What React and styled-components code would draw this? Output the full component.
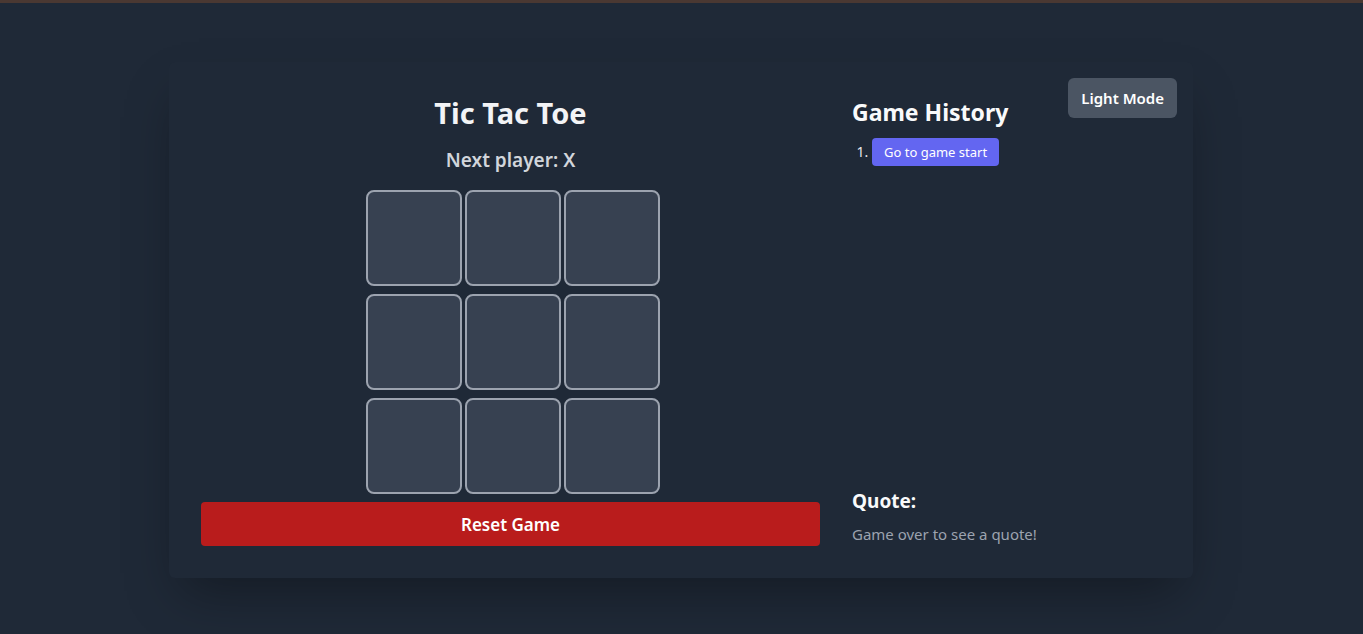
import styled, { createGlobalStyle } from "styled-components";
import { useState } from "react";

const GlobalStyle = createGlobalStyle`
  * { box-sizing: border-box; }
  body {
    margin: 0;
    background: #1f2937;
    font-family: "Noto Sans", "Open Sans", sans-serif;
  }
`;

const TopBar = styled.div`
  height: 3px;
  background: #4a3832;
`;

const Page = styled.main`
  min-height: 631px;
  display: flex;
  justify-content: center;
  align-items: flex-start;
  padding: 59px 1px 0 0;
`;

const Card = styled.section`
  position: relative;
  width: 1024px;
  padding: 32px;
  background: #1f2937;
  border-radius: 6px;
  box-shadow: 0 25px 50px -12px rgba(0, 0, 0, 0.35);
  display: grid;
  grid-template-columns: 619px 1fr;
  column-gap: 32px;
`;

const ThemeButton = styled.button`
  position: absolute;
  top: 16px;
  right: 16px;
  height: 40px;
  padding: 0 13px;
  border: none;
  border-radius: 6px;
  background: #4b5563;
  color: #ffffff;
  font-family: inherit;
  font-size: 15px;
  font-weight: 600;
  cursor: pointer;
`;

const GameColumn = styled.div`
  display: flex;
  flex-direction: column;
  align-items: center;
`;

const Title = styled.h1`
  margin: 1px 0 15px;
  font-size: 29px;
  line-height: 36px;
  font-weight: 700;
  color: #f3f4f6;
`;

const Status = styled.div`
  margin-bottom: 16px;
  font-size: 19px;
  line-height: 28px;
  font-weight: 600;
  color: #d1d5db;
`;

const Board = styled.div`
  display: grid;
  grid-template-columns: repeat(3, 96px);
  column-gap: 3px;
  row-gap: 8px;
  margin-left: 5px;
  margin-bottom: 8px;
`;

const Cell = styled.button`
  width: 96px;
  height: 96px;
  border: 2px solid #9ca3af;
  border-radius: 8px;
  background: #374151;
  color: #f9fafb;
  font-family: inherit;
  font-size: 40px;
  font-weight: 700;
  cursor: pointer;
`;

const ResetButton = styled.button`
  width: 100%;
  height: 44px;
  border: none;
  border-radius: 4px;
  background: #b91c1c;
  color: #ffffff;
  font-family: inherit;
  font-size: 17px;
  font-weight: 600;
  cursor: pointer;
`;

const SideColumn = styled.aside`
  display: flex;
  flex-direction: column;
  justify-content: space-between;
`;

const SideTitle = styled.h2`
  margin: 2px 0 10px;
  font-size: 23px;
  line-height: 32px;
  font-weight: 700;
  color: #f9fafb;
`;

const HistoryList = styled.ol`
  margin: 0;
  padding-left: 20px;
  color: #e5e7eb;
  font-size: 14px;
  line-height: 28px;
`;

const MoveButton = styled.button`
  height: 28px;
  padding: 0 12px;
  border: none;
  border-radius: 4px;
  background: #6366f1;
  color: #ffffff;
  font-family: inherit;
  font-size: 13px;
  cursor: pointer;
`;

const QuoteTitle = styled.h3`
  margin: 0 0 7px;
  font-size: 19px;
  line-height: 28px;
  font-weight: 700;
  color: #f9fafb;
`;

const QuoteText = styled.p`
  margin: 0;
  font-size: 15px;
  line-height: 24px;
  color: #9ca3af;
`;

const App = () => {
  const [squares, setSquares] = useState(Array(9).fill(null));
  const [xNext, setXNext] = useState(true);

  const play = (i) => {
    if (squares[i]) return;
    const next = squares.slice();
    next[i] = xNext ? "X" : "O";
    setSquares(next);
    setXNext(!xNext);
  };

  const reset = () => {
    setSquares(Array(9).fill(null));
    setXNext(true);
  };

  return (
    <>
      <GlobalStyle />
      <TopBar />
      <Page>
        <Card>
          <ThemeButton>Light Mode</ThemeButton>
          <GameColumn>
            <Title>Tic Tac Toe</Title>
            <Status>Next player: {xNext ? "X" : "O"}</Status>
            <Board>
              {squares.map((value, i) => (
                <Cell key={i} onClick={() => play(i)}>{value}</Cell>
              ))}
            </Board>
            <ResetButton onClick={reset}>Reset Game</ResetButton>
          </GameColumn>
          <SideColumn>
            <div>
              <SideTitle>Game History</SideTitle>
              <HistoryList>
                <li>
                  <MoveButton onClick={reset}>Go to game start</MoveButton>
                </li>
              </HistoryList>
            </div>
            <div>
              <QuoteTitle>Quote:</QuoteTitle>
              <QuoteText>Game over to see a quote!</QuoteText>
            </div>
          </SideColumn>
        </Card>
      </Page>
    </>
  );
};

export default App;
